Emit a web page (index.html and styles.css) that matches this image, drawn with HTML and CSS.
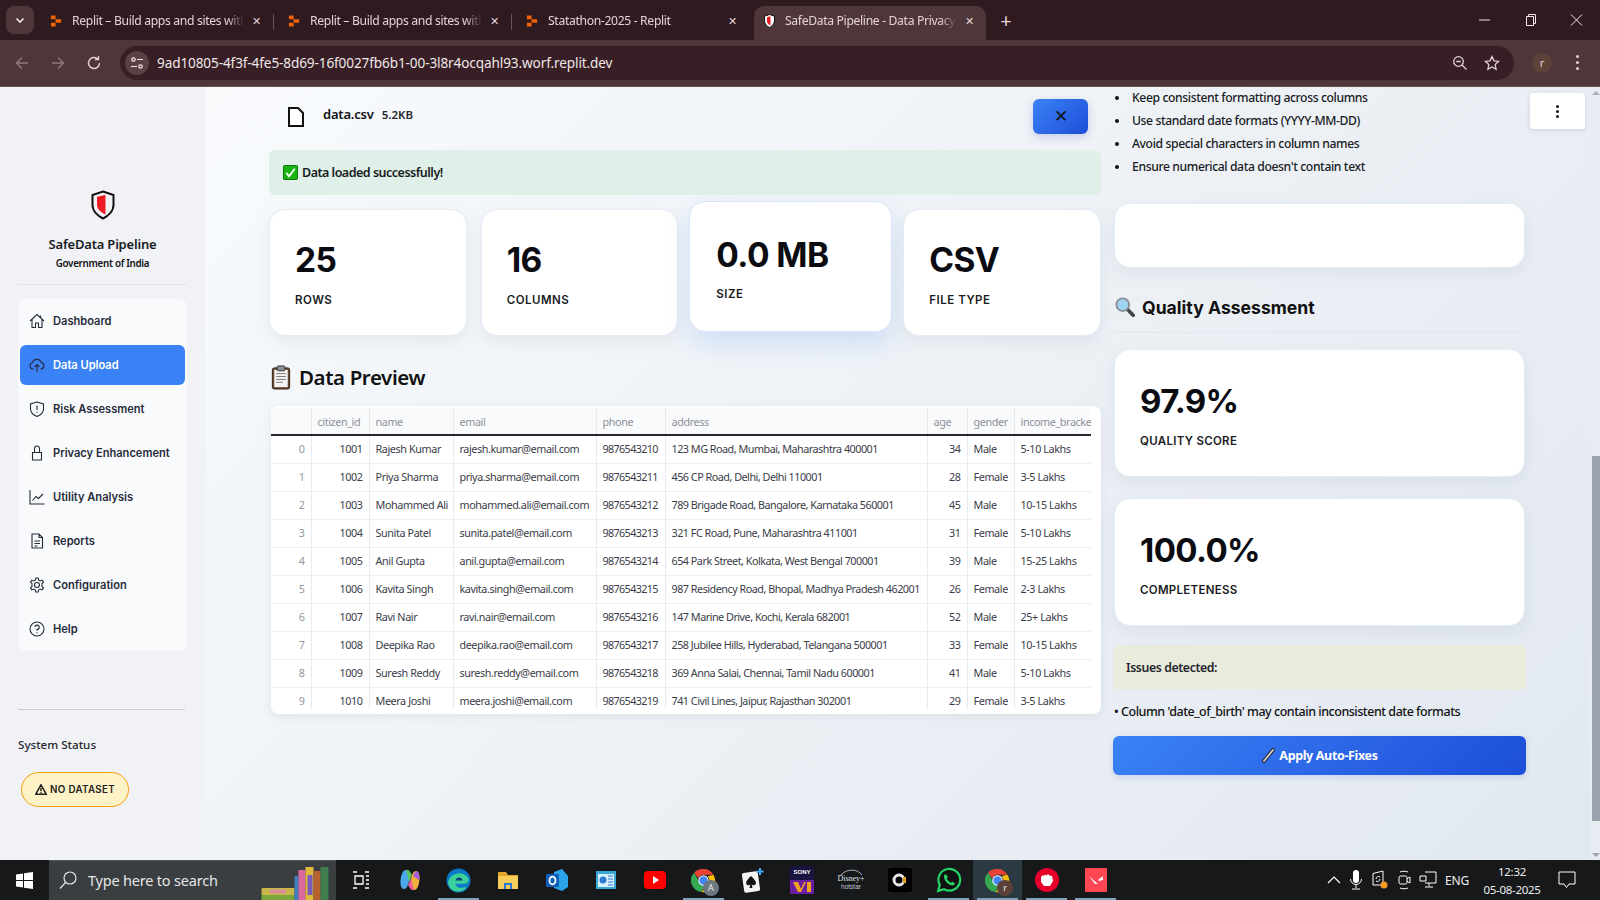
FILE: index.html
```html
<!DOCTYPE html>
<html lang="en">

<head>
    <meta charset="UTF-8">
    <title>SafeData Pipeline - Data Privacy</title>
    <link rel="stylesheet" href="styles.css">
</head>

<body>

    <!-- browser chrome -->
    <div class="tabstrip">
        <div class="tab-search"><svg width="12" height="12" viewBox="0 0 12 12"><path d="M2.500 4.500 6 8l3.500-3.500" fill="none" stroke="#f3e6e8" stroke-width="1.600"/></svg></div>
        <div class="tab">
            <svg class="favicon" viewBox="0 0 14 14"><path d="M1 1h5v4H1zM6 5h6v4H6zM1 9h5v4H1z" fill="#f26207"/></svg>
            <span class="tab-title">Replit – Build apps and sites with AI</span>
            <span class="tab-close">✕</span>
        </div>
        <div class="tab-sep"></div>
        <div class="tab">
            <svg class="favicon" viewBox="0 0 14 14"><path d="M1 1h5v4H1zM6 5h6v4H6zM1 9h5v4H1z" fill="#f26207"/></svg>
            <span class="tab-title">Replit – Build apps and sites with AI</span>
            <span class="tab-close">✕</span>
        </div>
        <div class="tab-sep"></div>
        <div class="tab">
            <svg class="favicon" viewBox="0 0 14 14"><path d="M1 1h5v4H1zM6 5h6v4H6zM1 9h5v4H1z" fill="#f26207"/></svg>
            <span class="tab-title">Statathon-2025 - Replit</span>
            <span class="tab-close">✕</span>
        </div>
        <div class="tab tab-active">
            <svg class="favicon" viewBox="0 0 24 28"><path d="M12 1 22 4.500V14C22 20 17 24.500 12 27 7 24.500 2 20 2 14V4.500Z" fill="#fff" stroke="#111" stroke-width="2"/><path d="M14 4.500 7 6.500V14C7 18 10 21 14 23Z" fill="#ed1c24"/></svg>
            <span class="tab-title">SafeData Pipeline - Data Privacy Suite</span>
            <span class="tab-close">✕</span>
        </div>
        <div class="tab-new">+</div>
        <div class="win-controls">
            <svg width="46" height="14" viewBox="0 0 46 14"><path d="M17 7h11" stroke="#f3e6e8"/></svg>
            <svg width="46" height="14" viewBox="0 0 46 14"><path d="M18.500 3.500h7v9h-7zM20.500 3.500v-2h7v9h-2" fill="none" stroke="#f3e6e8"/></svg>
            <svg width="46" height="14" viewBox="0 0 46 14"><path d="M17 1.500l11 11M28 1.500l-11 11" stroke="#f3e6e8"/></svg>
        </div>
    </div>

    <div class="toolbar">
        <svg class="tool-icon dim" viewBox="0 0 16 16"><path d="M14 8H2.500M8 2.500 2.500 8 8 13.500" fill="none" stroke="currentColor" stroke-width="1.400"/></svg>
        <svg class="tool-icon dim" viewBox="0 0 16 16"><path d="M2 8h11.500M8 2.500 13.500 8 8 13.500" fill="none" stroke="currentColor" stroke-width="1.400"/></svg>
        <svg class="tool-icon" viewBox="0 0 16 16"><path d="M13.500 8A5.500 5.500 0 1 1 11.800 4M12.500 1v3.500H9" fill="none" stroke="currentColor" stroke-width="1.400"/></svg>
        <div class="omnibox">
            <div class="site-info"><svg width="14" height="14" viewBox="0 0 14 14"><g fill="none" stroke="#f3e6e8" stroke-width="1.200"><circle cx="3.500" cy="3.500" r="1.700"/><path d="M7 3.500h6M1 10.500h6"/><circle cx="10.500" cy="10.500" r="1.700"/></g></svg></div>
            <span class="url">9ad10805-4f3f-4fe5-8d69-16f0027fb6b1-00-3l8r4ocqahl93.worf.replit.dev</span>
            <svg class="omni-icon" viewBox="0 0 16 16"><g fill="none" stroke="currentColor" stroke-width="1.300"><circle cx="6.500" cy="6.500" r="4.800"/><path d="M10 10l4.500 4.500M4.300 6.500h4.400"/></g></svg>
            <svg class="omni-icon" viewBox="0 0 16 16"><path d="M8 1.500l2 4.300 4.700.6-3.500 3.200.9 4.700L8 12l-4.100 2.300.9-4.700L1.300 6.400 6 5.800z" fill="none" stroke="currentColor" stroke-width="1.300"/></svg>
        </div>
        <div class="avatar">r</div>
        <div class="more-dots"><i></i><i></i><i></i></div>
    </div>

    <div class="app">
        <aside class="sidebar">
            <svg class="logo" viewBox="0 0 24 30"><path d="M12 1.500 22.500 5V15C22.500 21 17 26 12 28.500 7 26 1.500 21 1.500 15V5Z" fill="#f2f2f2" stroke="#111" stroke-width="2"/><path d="M14.500 5 6 6.800V15C6 19 10 22.500 14.500 24.500Z" fill="#ed1c24"/></svg>
            <div class="brand">SafeData Pipeline</div>
            <div class="brand-sub">Government of India</div>
            <hr class="side-rule">

            <nav class="nav">
                <a class="nav-item"><svg viewBox="0 0 16 16"><path d="M1 8 8 1.500 15 8M3 6.500V14.500H6.500V10H9.500V14.500H13V6.500M11.500 2.500V4.500"/></svg>Dashboard</a>
                <a class="nav-item active"><svg viewBox="0 0 16 16"><path d="M4.500 12H4A3.200 3.200 0 0 1 3.500 5.700 4.600 4.600 0 0 1 12.300 5.500 3.300 3.300 0 0 1 12 12H11.500M8 15V7.500M5.500 10 8 7.500 10.500 10"/></svg>Data Upload</a>
                <a class="nav-item"><svg viewBox="0 0 16 16"><path d="M8 1 14.500 3V8C14.500 11.500 11.500 14 8 15.500 4.500 14 1.500 11.500 1.500 8V3ZM8 4.500V9M8 10.800V11.800"/></svg>Risk Assessment</a>
                <a class="nav-item"><svg viewBox="0 0 16 16"><path d="M3.500 7.500H12.500V15H3.500ZM5.500 7.500V3.500A2.500 2.500 0 0 1 10.500 3.500V7.500"/></svg>Privacy Enhancement</a>
                <a class="nav-item"><svg viewBox="0 0 16 16"><path d="M1 1V15H15.500M3.500 11.500 7 7.500 9.500 9.500 14 5"/></svg>Utility Analysis</a>
                <a class="nav-item"><svg viewBox="0 0 16 16"><path d="M3 1H10L13.500 4.500V15H3ZM10 1V4.500H13.500M5.500 8H11M5.500 10.500H11M5.500 13H8.500"/></svg>Reports</a>
                <a class="nav-item"><svg viewBox="0 0 16 16"><circle cx="8" cy="8" r="2.500"/><path d="M6.800 1H9.200L9.600 3 11.300 3.900 13.200 3.100 14.500 5.200 13 6.600V9.400L14.500 10.800 13.200 12.900 11.300 12.100 9.600 13 9.200 15H6.800L6.400 13 4.700 12.100 2.800 12.900 1.500 10.800 3 9.400V6.600L1.500 5.200 2.800 3.100 4.700 3.900 6.400 3Z"/></svg>Configuration</a>
                <a class="nav-item"><svg viewBox="0 0 16 16"><circle cx="8" cy="8" r="7"/><path d="M5.800 6A2.200 2.200 0 1 1 8 8.500V9.800M8 11.300V12.300"/></svg>Help</a>
            </nav>

            <hr class="side-rule lower">
            <div class="status-title">System Status</div>
            <div class="status-pill"><svg width="12" height="11" viewBox="0 0 12 11"><path d="M6 .800 11.200 10.200H.800ZM6 4V7.300M6 8.200V9.200" fill="none" stroke="#222" stroke-width="1.500"/></svg>NO DATASET</div>
        </aside>

        <main class="main">
            <section class="left-col">
                <div class="file-row">
                    <svg class="file-icon" viewBox="0 0 16 20"><path d="M1 1H10L15 6V19H1Z" fill="#fff" stroke="#111" stroke-width="2"/></svg>
                    <span class="file-name">data.csv</span>
                    <span class="file-size">5.2KB</span>
                    <button class="file-remove">✕</button>
                </div>

                <div class="alert-success">
                    <svg class="emoji-check" viewBox="0 0 16 16"><rect x=".5" y=".5" width="15" height="15" rx="1" fill="#16b40e" stroke="#0a6a08"/><path d="M3.500 8.500 6.500 12 12.500 4" fill="none" stroke="#fff" stroke-width="2"/></svg>
                    <span>Data loaded successfully!</span>
                </div>

                <div class="metrics">
                    <div class="metric"><div class="metric-value">25</div><div class="metric-label">ROWS</div></div>
                    <div class="metric"><div class="metric-value">16</div><div class="metric-label">COLUMNS</div></div>
                    <div class="metric hovered"><div class="metric-value">0.0 MB</div><div class="metric-label">SIZE</div></div>
                    <div class="metric"><div class="metric-value">CSV</div><div class="metric-label">FILE TYPE</div></div>
                </div>

                <h2 class="preview-title">
                    <svg class="emoji-clip" viewBox="0 0 20 26"><rect x="1" y="3" width="18" height="22" rx="2" fill="#6b4a32" stroke="#2e2018"/><rect x="3" y="5" width="14" height="18" fill="#f4f4f4"/><rect x="6" y="1" width="8" height="5" rx="1" fill="#8d8f94" stroke="#333"/><path d="M5 9h10M5 12h10M5 15h10M5 18h7" stroke="#777" stroke-width="1"/></svg>
                    Data Preview
                </h2>

                <div class="table-card">
                    <div class="table-clip">
                        <table class="data-table">
                            <colgroup>
                                <col class="c-index"><col class="c-id"><col class="c-name"><col class="c-email"><col class="c-phone"><col class="c-addr"><col class="c-age"><col class="c-gender"><col class="c-income">
                            </colgroup>
                            <thead>
                                <tr><th></th><th>citizen_id</th><th>name</th><th>email</th><th>phone</th><th>address</th><th>age</th><th>gender</th><th>income_bracket</th></tr>
                            </thead>
                            <tbody>
                                <tr><td class="idx">0</td><td class="num">1001</td><td>Rajesh Kumar</td><td>rajesh.kumar@email.com</td><td>9876543210</td><td>123 MG Road, Mumbai, Maharashtra 400001</td><td class="num">34</td><td>Male</td><td>5-10 Lakhs</td></tr>
                                <tr><td class="idx">1</td><td class="num">1002</td><td>Priya Sharma</td><td>priya.sharma@email.com</td><td>9876543211</td><td>456 CP Road, Delhi, Delhi 110001</td><td class="num">28</td><td>Female</td><td>3-5 Lakhs</td></tr>
                                <tr><td class="idx">2</td><td class="num">1003</td><td>Mohammed Ali</td><td>mohammed.ali@email.com</td><td>9876543212</td><td>789 Brigade Road, Bangalore, Karnataka 560001</td><td class="num">45</td><td>Male</td><td>10-15 Lakhs</td></tr>
                                <tr><td class="idx">3</td><td class="num">1004</td><td>Sunita Patel</td><td>sunita.patel@email.com</td><td>9876543213</td><td>321 FC Road, Pune, Maharashtra 411001</td><td class="num">31</td><td>Female</td><td>5-10 Lakhs</td></tr>
                                <tr><td class="idx">4</td><td class="num">1005</td><td>Anil Gupta</td><td>anil.gupta@email.com</td><td>9876543214</td><td>654 Park Street, Kolkata, West Bengal 700001</td><td class="num">39</td><td>Male</td><td>15-25 Lakhs</td></tr>
                                <tr><td class="idx">5</td><td class="num">1006</td><td>Kavita Singh</td><td>kavita.singh@email.com</td><td>9876543215</td><td>987 Residency Road, Bhopal, Madhya Pradesh 462001</td><td class="num">26</td><td>Female</td><td>2-3 Lakhs</td></tr>
                                <tr><td class="idx">6</td><td class="num">1007</td><td>Ravi Nair</td><td>ravi.nair@email.com</td><td>9876543216</td><td>147 Marine Drive, Kochi, Kerala 682001</td><td class="num">52</td><td>Male</td><td>25+ Lakhs</td></tr>
                                <tr><td class="idx">7</td><td class="num">1008</td><td>Deepika Rao</td><td>deepika.rao@email.com</td><td>9876543217</td><td>258 Jubilee Hills, Hyderabad, Telangana 500001</td><td class="num">33</td><td>Female</td><td>10-15 Lakhs</td></tr>
                                <tr><td class="idx">8</td><td class="num">1009</td><td>Suresh Reddy</td><td>suresh.reddy@email.com</td><td>9876543218</td><td>369 Anna Salai, Chennai, Tamil Nadu 600001</td><td class="num">41</td><td>Male</td><td>5-10 Lakhs</td></tr>
                                <tr><td class="idx">9</td><td class="num">1010</td><td>Meera Joshi</td><td>meera.joshi@email.com</td><td>9876543219</td><td>741 Civil Lines, Jaipur, Rajasthan 302001</td><td class="num">29</td><td>Female</td><td>3-5 Lakhs</td></tr>
                            </tbody>
                        </table>
                    </div>
                </div>
            </section>

            <section class="right-col">
                <ul class="tips">
                    <li>Keep consistent formatting across columns</li>
                    <li>Use standard date formats (YYYY-MM-DD)</li>
                    <li>Avoid special characters in column names</li>
                    <li>Ensure numerical data doesn't contain text</li>
                </ul>

                <div class="blank-card"></div>

                <h2 class="quality-title">
                    <svg class="emoji-lens" viewBox="0 0 22 22"><path d="M13 13l7 7" stroke="#444" stroke-width="4" stroke-linecap="round"/><circle cx="8.500" cy="8.500" r="7" fill="#9fd3f2" stroke="#8a8f96" stroke-width="2"/></svg>
                    Quality Assessment
                </h2>
                <hr class="quality-rule">

                <div class="metric wide"><div class="metric-value">97.9%</div><div class="metric-label">QUALITY SCORE</div></div>
                <div class="metric wide"><div class="metric-value">100.0%</div><div class="metric-label">COMPLETENESS</div></div>

                <div class="alert-warn">Issues detected:</div>
                <p class="issue-line">• Column 'date_of_birth' may contain inconsistent date formats</p>

                <button class="fix-btn">
                    <svg width="14" height="16" viewBox="0 0 14 16"><path d="M12 2 3 13" stroke="#222" stroke-width="3.600" stroke-linecap="round"/><path d="M12 2 3 13" stroke="#cfd2d6" stroke-width="1.800" stroke-linecap="round"/></svg>
                    Apply Auto-Fixes
                </button>
            </section>

            <div class="kebab"><i></i><i></i><i></i></div>
        </main>

        <div class="page-scroll">
            <span class="arrow-up"></span>
            <span class="scroll-thumb"></span>
            <span class="arrow-down"></span>
        </div>
    </div>

    <!-- windows taskbar -->
    <footer class="taskbar">
        <div class="start"><svg width="17" height="17" viewBox="0 0 17 17"><path d="M0 2.500 7 1.500V8H0ZM8 1.300 17 0V8H8ZM0 9H7V15.500L0 14.500ZM8 9H17V17L8 15.700Z" fill="#fff"/></svg></div>
        <div class="searchbox">
            <svg width="20" height="20" viewBox="0 0 20 20"><circle cx="12" cy="8" r="6" fill="none" stroke="#e6e6e6" stroke-width="1.200"/><path d="M7.500 12.500 2 18.500" stroke="#e6e6e6" stroke-width="1.200"/></svg>
            <span>Type here to search</span>
            <svg class="books" width="77" height="40" viewBox="0 0 72 40"><rect x="0" y="27" width="33" height="7" rx="1" fill="#c9b54a"/><rect x="8" y="28.500" width="17" height="4" rx="2" fill="#d98f9a"/><rect x="0" y="34" width="33" height="6" fill="#7aa63c"/><rect x="33" y="15" width="4" height="25" fill="#3f7fc0"/><rect x="37" y="9" width="7" height="31" fill="#d9699f"/><rect x="44" y="6" width="8" height="34" fill="#e0b93a"/><rect x="46" y="14" width="5" height="20" fill="#7a5cc0"/><rect x="52" y="10" width="7" height="30" fill="#b5622e"/><rect x="59" y="6" width="8" height="34" fill="#3f7d4e"/></svg>
        </div>
        <div class="tb-icon"><svg width="18" height="18" viewBox="0 0 18 18"><path d="M1 1h4M13 1h4M1 17h4M13 17h4M3 5h8v8H3zM14 5h3M14 9h3M14 13h3" fill="none" stroke="#fff" stroke-width="1.300"/></svg></div>
        <div class="tb-icon"><svg width="24" height="24" viewBox="0 0 24 24"><path d="M8 2C5 2 4 5 3 9 2 14 2 21 6 21 9 21 10 17 11 13 12 8 12 2 8 2Z" fill="#4aa8e8"/><path d="M8 2C11 1 12 4 14 7L11 14C10 9 9 5 8 2Z" fill="#54c65a"/><path d="M16 22C19 22 20 19 21 15 22 10 22 3 18 3 15 3 14 7 13 11 12 16 12 22 16 22Z" fill="#f2b13c"/><path d="M16 22C13 23 12 20 10 17L13 10C14 15 15 19 16 22Z" fill="#e85ca0"/><path d="M18 3C20 3 22 6 21 12L15 8Z" fill="#a45ce0"/></svg></div>
        <div class="tb-icon open"><svg width="25" height="25" viewBox="0 0 24 24"><circle cx="12" cy="12" r="11.500" fill="#0b78c8"/><path d="M2 14C3 6 14 2 20 8 23 11 22 15 18 15H9C9 19 15 20 20 18 16 24 7 24 4 19 3 17 2 16 2 14Z" fill="#3ad29a"/><path d="M9 12C10 8 15 8 16 12Z" fill="#083f7a"/></svg></div>
        <div class="tb-icon"><svg width="22" height="22" viewBox="0 0 22 22"><path d="M1 3H9L11 6H21V20H1Z" fill="#e3a52a"/><rect x="1" y="7" width="20" height="13" fill="#f7ce5a"/><path d="M7 20V14H15V20H13V16H9V20Z" fill="#2a7bd0"/></svg></div>
        <div class="tb-icon"><svg width="24" height="24" viewBox="0 0 24 24"><path d="M9 4 17 1 23 8V19L17 23 9 20Z" fill="#2aa3e8"/><rect x="1" y="6" width="13" height="13" rx="1" fill="#0f5fb8"/><ellipse cx="7.500" cy="12.500" rx="3" ry="3.800" fill="none" stroke="#fff" stroke-width="1.800"/></svg></div>
        <div class="tb-icon"><svg width="22" height="22" viewBox="0 0 22 22"><rect x="1" y="2" width="20" height="18" fill="#38a8d8"/><rect x="3" y="5" width="16" height="13" fill="#d8eef8"/><circle cx="8" cy="11" r="3.500" fill="#2a7bd0"/><path d="M13 7h5M13 10h5M13 13h5M13 16h5" stroke="#2a7bd0"/></svg></div>
        <div class="tb-icon"><svg width="24" height="24" viewBox="0 0 24 24"><rect x="1" y="3" width="22" height="18" rx="4" fill="#f00"/><path d="M10 8l6 4-6 4z" fill="#fff"/></svg></div>
        <div class="tb-icon open"><svg class="chrome" width="25" height="25" viewBox="0 0 24 24"><use href="#chrome-logo"/></svg><span class="tb-badge grey">A</span></div>
        <div class="tb-icon"><svg width="24" height="26" viewBox="0 0 24 26"><rect x="2" y="5" width="16" height="20" rx="2" fill="#f4f4f4" transform="rotate(-8 10 15)"/><path d="M10 9c3 3 5 5 5 7a2.500 2.500 0 0 1-4.300 1.500L11.500 21H8.500l.8-3.500A2.500 2.500 0 0 1 5 16c0-2 2-4 5-7Z" fill="#111"/><path d="M19 1v7M15.500 4.500h7" stroke="#4aa8e8" stroke-width="2"/></svg></div>
        <div class="tb-icon"><svg width="24" height="28" viewBox="0 0 24 28"><rect x="0" y="0" width="24" height="28" rx="2" fill="#1a1440"/><rect x="0" y="14" width="24" height="14" fill="#6a1fa0"/><path d="M3 16l5 10h3L16 16l-2 0-3 7-3-7zM17 16h4v10h-4z" fill="#f0a020"/><text x="12" y="8" class="tb-mini">SONY</text></svg></div>
        <div class="tb-icon"><svg width="30" height="24" viewBox="0 0 30 24"><path d="M5 7C11 0 22 1 26 7" fill="none" stroke="#cfd6e8" stroke-width=".8"/><text x="15" y="13" class="tb-disney">Disney+</text><text x="15" y="21" class="tb-hotstar">hotstar</text></svg></div>
        <div class="tb-icon"><svg width="24" height="24" viewBox="0 0 24 24"><rect width="24" height="24" rx="3" fill="#000"/><circle cx="11" cy="12" r="5" fill="none" stroke="#e8e8e8" stroke-width="3"/><path d="M15 9h3v6h-3z" fill="#e0a020"/></svg></div>
        <div class="tb-icon open"><svg width="26" height="26" viewBox="0 0 24 24"><path d="M2 22 3.500 16.500A10 10 0 1 1 7.500 20.500Z" fill="#111" stroke="#25d366" stroke-width="2"/><path d="M8 7C7 8 7 10 8.500 12.500 10 15 13 17 15 17 16.500 17 17.500 16 17.500 15L15 13.500 14 14.500C12.500 14 10.500 12 10 10.500L11 9.500 9.500 7Z" fill="#25d366"/></svg></div>
        <div class="tb-icon open current"><svg class="chrome" width="25" height="25" viewBox="0 0 24 24"><use href="#chrome-logo"/></svg><span class="tb-badge brown">r</span></div>
        <div class="tb-icon open"><svg width="24" height="24" viewBox="0 0 24 24"><circle cx="12" cy="12" r="12" fill="#e6002b"/><path d="M6 9l2-2 1 1 1-1.500 1.500 1L13 6l1.500 1.500L17 8 18 13 15 18H9L6 14Z" fill="#fff"/></svg></div>
        <div class="tb-icon open"><svg width="22" height="24" viewBox="0 0 22 24"><rect width="22" height="24" fill="#ff4655"/><path d="M4 8 10 16H13ZM18 8 13 12 14 13 18 12Z" fill="#fff"/></svg></div>

        <div class="tray">
            <svg width="14" height="10" viewBox="0 0 14 10"><path d="M1 8 7 2 13 8" fill="none" stroke="#fff" stroke-width="1.200"/></svg>
            <svg width="14" height="22" viewBox="0 0 14 22"><rect x="4" y="1" width="6" height="13" rx="3" fill="#fff"/><path d="M1.500 10a5.500 5.500 0 0 0 11 0M7 16v3M3 20h8" fill="none" stroke="#fff"/></svg>
            <svg width="18" height="20" viewBox="0 0 18 20"><path d="M2 3.500 12 1V15H2Z" fill="none" stroke="#fff"/><path d="M5 9a2.500 2.500 0 0 1 4-2M9 9a2.500 2.500 0 0 1-4 2" fill="none" stroke="#fff"/><circle cx="13" cy="15" r="3.500" fill="#f59a23"/></svg>
            <svg width="14" height="20" viewBox="0 0 14 20"><path d="M3 2C5 1 9 1 11 2M3 18C5 19 9 19 11 18" fill="none" stroke="#fff"/><rect x="2" y="6" width="8" height="8" rx="1.500" fill="none" stroke="#fff"/><path d="M10 8.500 13 7V13L10 11.500" fill="none" stroke="#fff"/></svg>
            <svg width="18" height="18" viewBox="0 0 18 18"><path d="M6 1H17V12H6M1 5H7V10H1ZM10 12V15M6 16H14" fill="none" stroke="#fff"/></svg>
            <span class="lang">ENG</span>
            <div class="clock"><span>12:32</span><span>05-08-2025</span></div>
            <svg width="18" height="18" viewBox="0 0 18 18"><path d="M1 1H17V13H11L8.500 16.500 6 13H1Z" fill="none" stroke="#fff"/></svg>
        </div>
    </footer>

    <svg class="svg-defs" width="0" height="0">
        <symbol id="chrome-logo" viewBox="0 0 24 24">
            <path d="M12 1A11 11 0 0 1 21.500 6.500H12A5.500 5.500 0 0 0 7 10L3 4.500A11 11 0 0 1 12 1Z" fill="#ea4335"/>
            <path d="M3 4.500 7.500 12.500A5.500 5.500 0 0 0 13 17L10 23A11 11 0 0 1 3 4.500Z" fill="#34a853"/>
            <path d="M21.500 6.500A11 11 0 0 1 10 23L16.500 15A5.500 5.500 0 0 0 16 8Z" fill="#fbbc05"/>
            <circle cx="12" cy="12" r="4.500" fill="#4285f4" stroke="#fff"/>
        </symbol>
    </svg>

</body>

</html>
```

FILE: styles.css
```css
* {
    box-sizing: border-box;
}

body {
    margin: 0;
    width: 1600px;
    height: 900px;
    overflow: hidden;
    font-family: "Noto Sans", sans-serif;
    color: #111;
    background: #f0f2f6;
}

/* browser chrome */
.tabstrip {
    height: 40px;
    background: #2f1a20;
    display: flex;
    align-items: flex-end;
    padding-left: 6px;
    color: #e3d3d6;
    font-size: 12.200px;
}

.tab-search {
    width: 28px;
    height: 28px;
    margin: 0 2px 6px 0;
    border-radius: 8px;
    background: #4f363a;
    display: flex;
    align-items: center;
    justify-content: center;
}

.tab {
    width: 237px;
    height: 34px;
    display: flex;
    align-items: center;
    padding: 0 5px 5px 14px;
}

.favicon {
    width: 13px;
    height: 14px;
    flex: none;
    margin-right: 9px;
}

.tab-title {
    flex: 1;
    overflow: hidden;
    white-space: nowrap;
    letter-spacing: -0.35px;
    -webkit-mask-image: linear-gradient(90deg, #000 90%, transparent);
    mask-image: linear-gradient(90deg, #000 90%, transparent);
}

.tab-close {
    width: 24px;
    flex: none;
    text-align: center;
    font-size: 11px;
    color: #e3d3d6;
}

.tab-sep {
    width: 1px;
    height: 16px;
    margin: 0 0 10px 0;
    background: #6a5257;
}

.tab-active {
    width: 232px;
    margin-left: 5px;
    padding-left: 9px;
    background: #4f363a;
    border-radius: 10px 10px 0 0;
}

.tab-new {
    width: 40px;
    margin-bottom: 7px;
    text-align: center;
    font-size: 20px;
    line-height: 24px;
    color: #e3d3d6;
}

.win-controls {
    margin-left: auto;
    display: flex;
    gap: 0;
    padding: 0 0 13px;
}

.toolbar {
    height: 47px;
    padding: 6px 0 7px 14px;
    background: #4f363a;
    border-bottom: 1px solid #6a5257;
    display: flex;
    align-items: center;
    color: #f0e6e8;
}

.tool-icon {
    width: 16px;
    height: 16px;
    margin-right: 20px;
    color: #e3d3d6;
}

.tool-icon.dim {
    color: #8d7a7e;
}

.omnibox {
    width: 1394px;
    height: 34px;
    margin-left: -2px;
    padding: 0 14px 0 5px;
    border-radius: 17px;
    background: #371f25;
    display: flex;
    align-items: center;
}

.site-info {
    width: 24px;
    height: 24px;
    margin-right: 8px;
    border-radius: 50%;
    background: #5a4146;
    display: flex;
    align-items: center;
    justify-content: center;
}

.url {
    flex: 1;
    font-size: 13.600px;
    letter-spacing: -0.12px;
}

.omni-icon {
    width: 16px;
    height: 16px;
    margin-left: 16px;
    color: #e3d3d6;
}

.avatar {
    width: 20px;
    height: 20px;
    margin-left: 18px;
    border-radius: 50%;
    background: #5c4238;
    color: #e3d3d6;
    font-size: 11px;
    text-align: center;
    line-height: 19px;
}

.more-dots {
    margin-left: 24px;
    display: flex;
    flex-direction: column;
    gap: 3px;
}

.more-dots i {
    width: 3px;
    height: 3px;
    border-radius: 50%;
    background: #e3d3d6;
}

/* app */
.app {
    height: 773px;
    display: flex;
}

.sidebar {
    width: 205px;
    flex: none;
    padding: 103px 18px 0;
    background: #f0f2f6;
}

.logo {
    display: block;
    width: 24px;
    height: 30px;
    margin: 0 auto 14px;
}

.brand {
    font-size: 13px;
    font-weight: 600;
    line-height: 20px;
    letter-spacing: -0.2px;
    text-align: center;
    color: #1a1c24;
}

.brand-sub {
    margin-top: 2px;
    font-size: 9.800px;
    font-weight: 600;
    line-height: 16px;
    letter-spacing: -0.3px;
    text-align: center;
}

.side-rule {
    margin: 12px 0 14px;
    border: 0;
    border-top: 1px solid #e2e4ea;
}

.side-rule.lower {
    width: 167px;
    margin: 58px 0 25px;
    border-top-color: #c9cbd3;
}

.nav {
    height: 352px;
    padding: 0 2px;
    border-radius: 8px;
    background: #f9fafc;
}

.nav-item {
    height: 44px;
    padding: 0 0 0 9px;
    display: flex;
    align-items: center;
    font-family: Inter, sans-serif;
    font-size: 11.100px;
    font-weight: 600;
    color: #262b3a;
    border-radius: 6px;
}

.nav-item svg {
    width: 16px;
    height: 16px;
    margin-right: 8px;
    fill: none;
    stroke: #262b3a;
    stroke-width: 1.100;
}

.nav-item.active {
    height: 40px;
    margin: 2px 0;
    background: #3b82f6;
    color: #fff;
}

.status-title {
    font-size: 11.600px;
    font-weight: 500;
    line-height: 20px;
    color: #262730;
}

.status-pill {
    width: 108px;
    height: 35px;
    margin: 17px 0 0 3px;
    border: 1px solid #f59e0b;
    border-radius: 18px;
    background: #fef3c7;
    display: flex;
    align-items: center;
    justify-content: center;
    gap: 3px;
    font-family: Inter, sans-serif;
    font-size: 9.800px;
    font-weight: 600;
    letter-spacing: 0.3px;
    color: #222;
}

.main {
    position: relative;
    flex: 1;
    padding-left: 64px;
    display: flex;
    gap: 12px;
    background: linear-gradient(135deg, #f8fafc 0%, #e2e8f0 100%);
}

.left-col {
    width: 832px;
    flex: none;
}

.right-col {
    width: 413px;
    flex: none;
}

.file-row {
    height: 63px;
    padding: 12px 13px 16px 19px;
    display: flex;
    align-items: center;
}

.file-icon {
    width: 16px;
    height: 20px;
    margin: 0 19px 0 0;
}

.file-name {
    margin-bottom: 5px;
    font-size: 13px;
    font-weight: 600;
    letter-spacing: -0.2px;
}

.file-size {
    margin: 0 0 5px 8px;
    font-size: 11.500px;
    font-weight: 600;
    letter-spacing: 0;
    color: #262730;
}

.file-remove {
    margin-left: auto;
    width: 55px;
    height: 35px;
    border: none;
    border-radius: 6px;
    background: linear-gradient(135deg, #3b82f6, #1d4ed8);
    box-shadow: 0 3px 8px rgba(30, 64, 175, 0.2);
    color: #111;
    font-size: 17px;
}

.alert-success {
    height: 45px;
    margin-bottom: 14px;
    padding-left: 14px;
    border-radius: 6px;
    background: #dff0e8;
    display: flex;
    align-items: center;
    gap: 4px;
    font-size: 12.500px;
    font-weight: 600;
    letter-spacing: -0.5px;
    color: #1a1c24;
}

.emoji-check {
    width: 15px;
    height: 15px;
}

.metrics {
    display: flex;
    gap: 14px;
}

.metric {
    flex: 1;
    height: 127px;
    padding: 34px 0 0 25px;
    border: 1px solid #e6ecf5;
    border-radius: 16px;
    background: #fff;
    box-shadow: 0 6px 16px rgba(100, 116, 139, 0.1);
}

.metric.hovered {
    flex: none;
    width: 203px;
    height: 131px;
    margin: -8px -3px 4px;
    padding: 37px 0 0 26px;
    border-color: #dbe5f7;
    box-shadow: 0 12px 26px rgba(59, 130, 246, 0.18);
}

.metric-value {
    font-family: Inter, sans-serif;
    font-size: 33.500px;
    font-weight: 700;
    line-height: 32px;
    letter-spacing: -0.6px;
    color: #0a0c12;
}

.metric-label {
    margin-top: 16px;
    font-family: Inter, sans-serif;
    font-size: 11.500px;
    font-weight: 600;
    line-height: 16px;
    letter-spacing: 0.5px;
    color: #1a1c24;
}

.metric.hovered .metric-label {
    margin-top: 15px;
}

.preview-title {
    height: 28px;
    margin: 27px 0 15px 2px;
    display: flex;
    align-items: center;
    gap: 8px;
    font-size: 20.500px;
    font-weight: 600;
    letter-spacing: -0.4px;
    color: #111;
}

.emoji-clip {
    width: 20px;
    height: 25px;
}

.table-card {
    height: 308px;
    margin-left: 2px;
    padding: 2px 9px 5px 0;
    border-radius: 8px;
    background: #fff;
    box-shadow: 0 2px 8px rgba(100, 116, 139, 0.12);
}

.table-clip {
    height: 301px;
    overflow: hidden;
}

.data-table {
    width: 820px;
    table-layout: fixed;
    border-collapse: collapse;
    font-size: 10.800px;
    letter-spacing: -0.4px;
    color: #3a3c48;
}

.c-index { width: 40px; }
.c-id { width: 58px; }
.c-name { width: 84px; }
.c-email { width: 143px; }
.c-phone { width: 69px; }
.c-addr { width: 262px; }
.c-age { width: 40px; }
.c-gender { width: 47px; }
.c-income { width: 77px; }

.data-table th,
.data-table td {
    height: 28px;
    padding: 0 6px 2px;
    border-right: 1px solid #e8eaee;
    border-bottom: 1px solid #eceef1;
    overflow: hidden;
    white-space: nowrap;
    font-weight: 400;
    text-align: left;
}

.data-table th {
    height: 27px;
    padding-bottom: 0;
    background: #f9fafb;
    color: #8d909a;
    border-bottom: 2px solid #262730;
}

.data-table th:last-child,
.data-table td:last-child {
    border-right: none;
}

.data-table td:nth-child(4) {
    letter-spacing: -0.43px;
}

.data-table td:nth-child(5) {
    letter-spacing: -0.65px;
}

.data-table td:nth-child(6) {
    letter-spacing: -0.5px;
}

.data-table td.num {
    text-align: right;
}

.data-table td.idx {
    text-align: right;
    color: #93959e;
}

.tips {
    margin: -1px 0 25px;
    padding: 0;
    list-style: none;
    font-size: 12.200px;
    font-weight: 500;
    line-height: 23px;
    letter-spacing: -0.4px;
    color: #1a1c24;
}

.tips li {
    display: flex;
    align-items: center;
    padding-left: 2px;
}

.tips li::before {
    content: "";
    width: 4px;
    height: 4px;
    margin-right: 13px;
    border-radius: 50%;
    background: #111;
}

.blank-card {
    height: 65px;
    margin: 0 1px 27px;
    border: 1px solid #e6ecf5;
    border-radius: 16px;
    background: #fff;
    box-shadow: 0 6px 16px rgba(100, 116, 139, 0.1);
}

.quality-title {
    height: 24px;
    margin: 0 0 13px 2px;
    display: flex;
    align-items: center;
    gap: 7px;
    font-family: Inter, sans-serif;
    font-size: 17.600px;
    font-weight: 700;
    color: #111;
}

.emoji-lens {
    width: 20px;
    height: 20px;
}

.quality-rule {
    margin: 0 0 16px;
    border: 0;
    border-top: 1px solid #e0e5ee;
}

.metric.wide {
    height: 128px;
    margin: 0 1px 21px;
    padding: 35px 0 0 25px;
}

.metric.wide .metric-value {
    font-size: 33px;
}

.metric.wide .metric-label {
    letter-spacing: 0.3px;
}

.metric.wide + .alert-warn {
    margin-top: -2px;
}

.alert-warn {
    height: 45px;
    padding-left: 13px;
    border-radius: 6px;
    background: #e9ebdd;
    display: flex;
    align-items: center;
    font-size: 12.300px;
    font-weight: 600;
    letter-spacing: -0.4px;
    color: #262730;
}

.issue-line {
    margin: 12px 0 14px 1px;
    font-size: 12.500px;
    font-weight: 500;
    line-height: 20px;
    letter-spacing: -0.47px;
    color: #111;
}

.fix-btn {
    width: 100%;
    height: 39px;
    border: none;
    border-radius: 6px;
    background: linear-gradient(135deg, #3b82f6, #1d4ed8);
    box-shadow: 0 2px 6px rgba(30, 64, 175, 0.15);
    display: flex;
    align-items: center;
    justify-content: center;
    gap: 4px;
    font-family: "Noto Sans", sans-serif;
    font-size: 12.500px;
    font-weight: 700;
    letter-spacing: -0.35px;
    color: #fff;
}

.kebab {
    position: absolute;
    top: 6px;
    right: 5px;
    width: 55px;
    height: 36px;
    border-radius: 3px;
    background: #fff;
    box-shadow: 0 1px 4px rgba(100, 116, 139, 0.25);
    display: flex;
    flex-direction: column;
    align-items: center;
    justify-content: center;
    gap: 2px;
}

.kebab i {
    width: 3px;
    height: 3px;
    background: #111;
    border-radius: 50%;
}

.page-scroll {
    position: relative;
    width: 10px;
    background: #e7ebf2;
}

.arrow-up,
.arrow-down,
.scroll-thumb {
    position: absolute;
    left: 2px;
}

.arrow-up {
    top: 4px;
    border: 4px solid transparent;
    border-top: 0;
    border-bottom: 4px solid #b0b4bd;
}

.arrow-down {
    bottom: 3px;
    border: 4px solid transparent;
    border-bottom: 0;
    border-top: 4px solid #9da2af;
}

.scroll-thumb {
    top: 369px;
    height: 365px;
    width: 8px;
    background: #9da2af;
}

/* taskbar */
.taskbar {
    height: 40px;
    background: #16181a;
    display: flex;
    color: #fff;
}

.start {
    width: 49px;
    display: flex;
    align-items: center;
    justify-content: center;
}

.searchbox {
    position: relative;
    width: 287px;
    padding: 0 0 2px 9px;
    background: #3a3e41;
    border-top: 1px solid #55595c;
    display: flex;
    align-items: center;
    gap: 10px;
    font-size: 14.500px;
    color: #e6e6e6;
    letter-spacing: -0.2px;
}

.books {
    position: absolute;
    right: 0;
    top: 0;
}

.tb-icon {
    position: relative;
    width: 49px;
    display: flex;
    align-items: center;
    justify-content: center;
}

.tb-icon.open::after {
    content: "";
    position: absolute;
    left: 4px;
    right: 4px;
    bottom: 0;
    height: 2px;
    background: #7ea3b8;
}

.tb-icon.current {
    background: #2b3a42;
}

.tb-badge {
    position: absolute;
    right: 9px;
    bottom: 4px;
    width: 16px;
    height: 16px;
    border-radius: 50%;
    font-size: 9px;
    line-height: 16px;
    text-align: center;
    color: #eee;
}

.tb-badge.grey {
    background: #6d7780;
}

.tb-badge.brown {
    background: #5c4238;
}

.tb-mini {
    font-family: "Liberation Sans", sans-serif;
    font-size: 6px;
    font-weight: 700;
    text-anchor: middle;
    fill: #fff;
}

.tb-disney {
    font-family: "Liberation Serif", serif;
    font-size: 8px;
    text-anchor: middle;
    fill: #dfe4f0;
}

.tb-hotstar {
    font-family: "Liberation Sans", sans-serif;
    font-size: 6.500px;
    text-anchor: middle;
    fill: #c5cad6;
}

.tray {
    margin-left: auto;
    padding-right: 24px;
    display: flex;
    align-items: center;
    gap: 8px;
}

.lang {
    font-size: 12px;
    letter-spacing: -0.2px;
    color: #eee;
}

.clock {
    width: 62px;
    margin: 0 7px 0 4px;
    display: flex;
    flex-direction: column;
    align-items: center;
    gap: 1px;
    font-size: 11.500px;
    line-height: 17px;
    letter-spacing: -0.3px;
    color: #eee;
}

.svg-defs {
    position: absolute;
}
```
